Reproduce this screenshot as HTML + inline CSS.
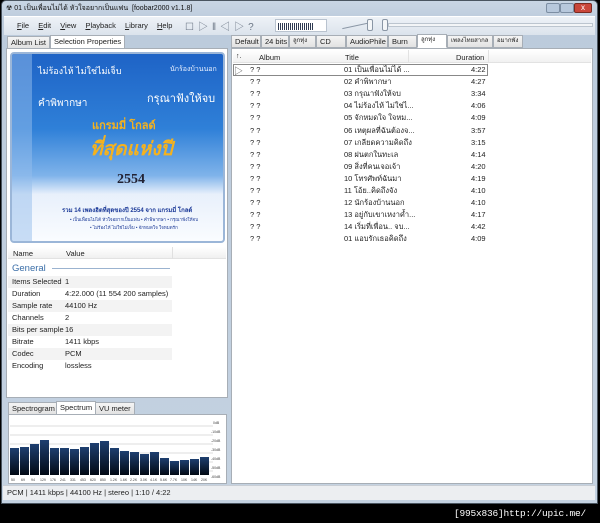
<!DOCTYPE html>
<html><head><meta charset="utf-8"><style>
*{margin:0;padding:0;box-sizing:border-box}
body{width:600px;height:523px;background:#000;position:relative;overflow:hidden;font-family:"Liberation Sans","Noto Sans CJK SC",sans-serif;font-size:8px;color:#222}
.a{position:absolute}
.win{left:1px;top:0;width:597px;height:504px;background:linear-gradient(#c9d6e4,#bccbdc 20px,#c4d2e1);border:1px solid #4a5560;border-radius:5px 5px 0 0}
.t{white-space:nowrap}
.tab{position:absolute;height:13px;border:1px solid #a7aeb6;background:linear-gradient(#f4f4f4,#e2e2e2);font-size:7.5px;line-height:11px;padding:0 3px;overflow:hidden;white-space:nowrap}
.tab.sel{background:#fff;border-bottom-color:#fff;height:14px;top:-1px}
.th{font-size:6px}
.row{position:absolute;left:0;height:12px;line-height:12px;font-size:7.5px;white-space:nowrap}
</style></head><body>
<div class="a win"></div>
<div class="a t" style="left:6px;top:3px;font-size:7px;color:#111">☢ 01 เป็นเพื่อนไม่ได้ หัวใจอยากเป็นแฟน &nbsp;[foobar2000 v1.1.8]</div>
<div class="a" style="left:546px;top:3px;width:14px;height:10px;background:#b7c8dc;border:1px solid #7c8ea3;border-radius:2px"></div>
<div class="a" style="left:560px;top:3px;width:14px;height:10px;background:#b7c8dc;border:1px solid #7c8ea3;border-radius:2px"></div>
<div class="a" style="left:574px;top:3px;width:18px;height:10px;background:#c9463a;border:1px solid #7a2a20;border-radius:2px;color:#fff;font-size:8px;line-height:8px;text-align:center">x</div>
<div class="a" style="left:4px;top:16px;width:591px;height:19px;background:linear-gradient(#eef2f7,#dbe3ec);border-top:1px solid #fff"></div>
<div class="a t" style="left:17px;top:21px;font-size:7.5px;word-spacing:7px"><u>F</u>ile <u>E</u>dit <u>V</u>iew <u>P</u>layback <u>L</u>ibrary <u>H</u>elp</div>
<div class="a t" style="left:185px;top:18px;font-size:10px;color:#6a7584;letter-spacing:4px">☐▷‖◁▷?</div>
<div class="a" style="left:275px;top:19px;width:52px;height:13px;background:#fff;border:1px solid #b9c3cf"></div>
<div class="a" style="left:278px;top:23px;width:36px;height:7px;background:repeating-linear-gradient(90deg,#2e3a52 0 1px,transparent 1px 2px)"></div>
<div class="a" style="left:342px;top:25px;width:30px;height:1px;background:#8b97a6;transform:rotate(-12deg)"></div>
<div class="a" style="left:367px;top:19px;width:6px;height:12px;background:#f4f6f8;border:1px solid #8a96a5;border-radius:2px"></div>
<div class="a" style="left:388px;top:23px;width:205px;height:4px;background:#f3f5f7;border:1px solid #bcc5cf"></div>
<div class="a" style="left:382px;top:19px;width:6px;height:12px;background:#f4f6f8;border:1px solid #8a96a5;border-radius:2px"></div>
<div class="a" style="left:6px;top:35px;width:223px;height:468px">
<div class="tab" style="left:1px;top:1px">Album List</div>
<div class="tab sel" style="left:44px;top:0px">Selection Properties</div>
</div>
<div class="a" style="left:6px;top:48px;width:222px;height:350px;background:#fff;border:1px solid #a7aeb6"></div>
<div class="a" style="left:10px;top:52px;width:215px;height:191px;background:linear-gradient(#1e63c6,#2f80d8 40%,#7fb3ea 65%,#e8f0fb 75%,#fafcff);border:2px solid #9bb6d8;border-radius:4px;overflow:hidden">
<div class="a" style="left:0;top:0;width:20px;height:191px;background:rgba(150,190,235,.5)"></div>
<div class="a t" style="left:26px;top:10px;color:#fff;font-size:9px">ไม่ร้องไห้ ไม่ใช่ไม่เจ็บ</div>
<div class="a t" style="left:158px;top:10px;color:#e8f0ff;font-size:7px">นักร้องบ้านนอก</div>
<div class="a t" style="left:135px;top:35px;color:#fff;font-size:11px">กรุณาฟังให้จบ</div>
<div class="a t" style="left:26px;top:42px;color:#fff;font-size:10px">คำพิพากษา</div>
<div class="a t" style="left:80px;top:62px;color:#f5b21e;font-size:11px;font-weight:bold">แกรมมี่ โกลด์</div>
<div class="a t" style="left:78px;top:80px;color:#f5b21e;font-size:19px;font-weight:bold;font-style:italic">ที่สุดแห่งปี</div>
<div class="a t" style="left:105px;top:118px;color:#223;font-size:14px;font-weight:bold;font-family:'Liberation Serif',serif">2554</div>
<div class="a t" style="left:50px;top:151px;color:#1c3a98;font-size:6px;font-weight:bold">รวม 14 เพลงฮิตที่สุดของปี 2554 จาก แกรมมี่ โกลด์</div>
<div class="a t" style="left:58px;top:162px;color:#1c3a98;font-size:4.5px">• เป็นเพื่อนไม่ได้ หัวใจอยากเป็นแฟน • คำพิพากษา • กรุณาฟังให้จบ</div>
<div class="a t" style="left:78px;top:170px;color:#1c3a98;font-size:4.5px">• ไม่ร้องไห้ ไม่ใช่ไม่เจ็บ • จักหมดใจ ใจหมดรัก</div>
</div>
<div class="a" style="left:8px;top:247px;width:218px;height:12px;background:linear-gradient(#fff,#f0f0f0);border-bottom:1px solid #e2e2e2"></div>
<div class="a" style="left:172px;top:247px;width:1px;height:12px;background:#e0e0e0"></div>
<div class="a t" style="left:13px;top:249px;font-size:7.5px">Name</div>
<div class="a t" style="left:66px;top:249px;font-size:7.5px">Value</div>
<div class="a t" style="left:12px;top:263px;font-size:9.5px;color:#3a6ea8">General</div>
<div class="a" style="left:52px;top:268px;width:118px;height:1px;background:#9bb3d0"></div>
<div class="a" style="left:8px;top:276px;width:164px">
<div class="row" style="top:0;width:164px;background:#f3f3f3"><span style="position:absolute;left:4px">Items Selected</span><span style="position:absolute;left:57px">1</span></div>
<div class="row" style="top:12px;width:164px"><span style="position:absolute;left:4px">Duration</span><span style="position:absolute;left:57px">4:22.000 (11 554 200 samples)</span></div>
<div class="row" style="top:24px;width:164px;background:#f3f3f3"><span style="position:absolute;left:4px">Sample rate</span><span style="position:absolute;left:57px">44100 Hz</span></div>
<div class="row" style="top:36px;width:164px"><span style="position:absolute;left:4px">Channels</span><span style="position:absolute;left:57px">2</span></div>
<div class="row" style="top:48px;width:164px;background:#f3f3f3"><span style="position:absolute;left:4px">Bits per sample</span><span style="position:absolute;left:57px">16</span></div>
<div class="row" style="top:60px;width:164px"><span style="position:absolute;left:4px">Bitrate</span><span style="position:absolute;left:57px">1411 kbps</span></div>
<div class="row" style="top:72px;width:164px;background:#f3f3f3"><span style="position:absolute;left:4px">Codec</span><span style="position:absolute;left:57px">PCM</span></div>
<div class="row" style="top:84px;width:164px"><span style="position:absolute;left:4px">Encoding</span><span style="position:absolute;left:57px">lossless</span></div>
</div>
<div class="a" style="left:6px;top:402px;width:222px;height:13px">
<div class="tab" style="left:2px;top:0">Spectrogram</div>
<div class="tab sel" style="left:50px;top:-1px">Spectrum</div>
<div class="tab" style="left:89px;top:0">VU meter</div>
</div>
<div class="a" style="left:8px;top:414px;width:219px;height:70px;background:#fff;border:1px solid #a7aeb6"></div>
<svg class="a" style="left:8px;top:414px" width="219" height="70">
<g stroke="#dcdcdc" stroke-width="1"><line x1="2" y1="12" x2="205" y2="12"/><line x1="2" y1="21" x2="205" y2="21"/><line x1="2" y1="30" x2="205" y2="30"/><line x1="2" y1="39" x2="205" y2="39"/><line x1="2" y1="48" x2="205" y2="48"/><line x1="2" y1="57" x2="205" y2="57"/></g>
<defs><linearGradient id="g" x1="0" y1="0" x2="0" y2="1"><stop offset="0" stop-color="#1e3f70"/><stop offset="1" stop-color="#020914"/></linearGradient></defs>
<g fill="url(#g)">
<rect x="2" y="34" width="9" height="27"/><rect x="12" y="33" width="9" height="28"/><rect x="22" y="30" width="9" height="31"/><rect x="32" y="26" width="9" height="35"/><rect x="42" y="34" width="9" height="27"/><rect x="52" y="34" width="9" height="27"/><rect x="62" y="35" width="9" height="26"/><rect x="72" y="33" width="9" height="28"/><rect x="82" y="29" width="9" height="32"/><rect x="92" y="27" width="9" height="34"/><rect x="102" y="34" width="9" height="27"/><rect x="112" y="37" width="9" height="24"/><rect x="122" y="38" width="9" height="23"/><rect x="132" y="40" width="9" height="21"/><rect x="142" y="38" width="9" height="23"/><rect x="152" y="44" width="9" height="17"/><rect x="162" y="47" width="9" height="14"/><rect x="172" y="46" width="9" height="15"/><rect x="182" y="45" width="9" height="16"/><rect x="192" y="43" width="9" height="18"/>
</g>
<g font-size="3.5" fill="#444" font-family="Liberation Sans"><text x="3" y="67">50</text><text x="13" y="67">69</text><text x="23" y="67">94</text><text x="32" y="67">129</text><text x="42" y="67">176</text><text x="52" y="67">241</text><text x="62" y="67">331</text><text x="72" y="67">453</text><text x="82" y="67">620</text><text x="92" y="67">850</text><text x="102" y="67">1.2K</text><text x="112" y="67">1.6K</text><text x="122" y="67">2.2K</text><text x="132" y="67">3.0K</text><text x="142" y="67">4.1K</text><text x="152" y="67">5.6K</text><text x="162" y="67">7.7K</text><text x="173" y="67">10K</text><text x="183" y="67">14K</text><text x="193" y="67">20K</text>
<text x="205" y="10">0dB</text><text x="203" y="19">-10dB</text><text x="203" y="28">-20dB</text><text x="203" y="37">-30dB</text><text x="203" y="46">-40dB</text><text x="203" y="55">-50dB</text><text x="203" y="64">-60dB</text></g>
</svg>
<div class="a" style="left:3px;top:485px;width:592px;height:15px;background:#eceef1;border-top:1px solid #c9ced5"></div>
<div class="a t" style="left:7px;top:488px;font-size:7.5px">PCM | 1411 kbps | 44100 Hz | stereo | 1:10 / 4:22</div>
<div class="a" style="left:231px;top:35px;width:362px;height:13px">
<div class="tab" style="left:0;top:0;width:30px">Default</div>
<div class="tab" style="left:30px;top:0;width:28px">24 bits</div>
<div class="tab th" style="left:58px;top:0;width:27px">ลูกทุ่ง</div>
<div class="tab" style="left:85px;top:0;width:30px">CD</div>
<div class="tab" style="left:115px;top:0;width:42px">AudioPhile</div>
<div class="tab" style="left:157px;top:0;width:29px">Burn</div>
<div class="tab sel th" style="left:186px;top:-1px;width:30px">ลูกทุ่ง</div>
<div class="tab th" style="left:216px;top:0;width:46px">เพลงไทยสากล</div>
<div class="tab th" style="left:262px;top:0;width:30px">อมากพัง</div>
</div>
<div class="a" style="left:231px;top:48px;width:362px;height:436px;background:#fff;border:1px solid #a7aeb6"></div>
<div class="a" style="left:233px;top:50px;width:358px;height:13px;background:linear-gradient(#fff,#f1f1f1);border-bottom:1px solid #e2e2e2"></div>
<div class="a" style="left:408px;top:50px;width:1px;height:13px;background:#e2e2e2"></div>
<div class="a" style="left:488px;top:50px;width:1px;height:13px;background:#e2e2e2"></div>
<div class="a t" style="left:236px;top:53px;font-size:7px">↑.</div>
<div class="a t" style="left:259px;top:53px;font-size:7.5px">Album</div>
<div class="a t" style="left:345px;top:53px;font-size:7.5px">Title</div>
<div class="a t" style="left:456px;top:53px;font-size:7.5px">Duration</div>
<div class="a" style="left:233px;top:64px;width:255px;height:12px;border:1px solid #888"></div>
<div class="a" style="left:234px;top:64px;font-size:9px;color:#555">▷</div>
<div class="a" style="left:233px;top:64px;width:255px;font-size:7px">
<div class="row" style="top:0px;left:17px">? ?</div><div class="row" style="top:0px;left:111px">01 เป็นเพื่อนไม่ได้ ...</div><div class="row" style="top:0px;left:238px">4:22</div>
<div class="row" style="top:12.1px;left:17px">? ?</div><div class="row" style="top:12.1px;left:111px">02 คำพิพากษา</div><div class="row" style="top:12.1px;left:238px">4:27</div>
<div class="row" style="top:24.2px;left:17px">? ?</div><div class="row" style="top:24.2px;left:111px">03 กรุณาฟังให้จบ</div><div class="row" style="top:24.2px;left:238px">3:34</div>
<div class="row" style="top:36.3px;left:17px">? ?</div><div class="row" style="top:36.3px;left:111px">04 ไม่ร้องไห้ ไม่ใช่ไ...</div><div class="row" style="top:36.3px;left:238px">4:06</div>
<div class="row" style="top:48.4px;left:17px">? ?</div><div class="row" style="top:48.4px;left:111px">05 จักหมดใจ ใจหม...</div><div class="row" style="top:48.4px;left:238px">4:09</div>
<div class="row" style="top:60.5px;left:17px">? ?</div><div class="row" style="top:60.5px;left:111px">06 เหตุผลที่ฉันต้องจ...</div><div class="row" style="top:60.5px;left:238px">3:57</div>
<div class="row" style="top:72.6px;left:17px">? ?</div><div class="row" style="top:72.6px;left:111px">07 เกลียดความคิดถึง</div><div class="row" style="top:72.6px;left:238px">3:15</div>
<div class="row" style="top:84.7px;left:17px">? ?</div><div class="row" style="top:84.7px;left:111px">08 ฝนตกในทะเล</div><div class="row" style="top:84.7px;left:238px">4:14</div>
<div class="row" style="top:96.8px;left:17px">? ?</div><div class="row" style="top:96.8px;left:111px">09 สิ่งที่คนเจอเจ้า</div><div class="row" style="top:96.8px;left:238px">4:20</div>
<div class="row" style="top:108.9px;left:17px">? ?</div><div class="row" style="top:108.9px;left:111px">10 โทรศัพท์ฉันมา</div><div class="row" style="top:108.9px;left:238px">4:19</div>
<div class="row" style="top:121px;left:17px">? ?</div><div class="row" style="top:121px;left:111px">11 โอ้ย..คิดถึงจัง</div><div class="row" style="top:121px;left:238px">4:10</div>
<div class="row" style="top:133.1px;left:17px">? ?</div><div class="row" style="top:133.1px;left:111px">12 นักร้องบ้านนอก</div><div class="row" style="top:133.1px;left:238px">4:10</div>
<div class="row" style="top:145.2px;left:17px">? ?</div><div class="row" style="top:145.2px;left:111px">13 อยู่กับเขาเหงาค้ำ...</div><div class="row" style="top:145.2px;left:238px">4:17</div>
<div class="row" style="top:157.3px;left:17px">? ?</div><div class="row" style="top:157.3px;left:111px">14 เริ่มที่เพื่อน.. จบ...</div><div class="row" style="top:157.3px;left:238px">4:42</div>
<div class="row" style="top:169.4px;left:17px">? ?</div><div class="row" style="top:169.4px;left:111px">01 แอบรักเธอคิดถึง</div><div class="row" style="top:169.4px;left:238px">4:09</div>
</div>
<div class="a t" style="left:454px;top:508px;color:#fff;font-size:9.5px;font-family:'Liberation Mono',monospace;letter-spacing:-0.2px">[995x836]http://upic.me/</div>
</body></html>
